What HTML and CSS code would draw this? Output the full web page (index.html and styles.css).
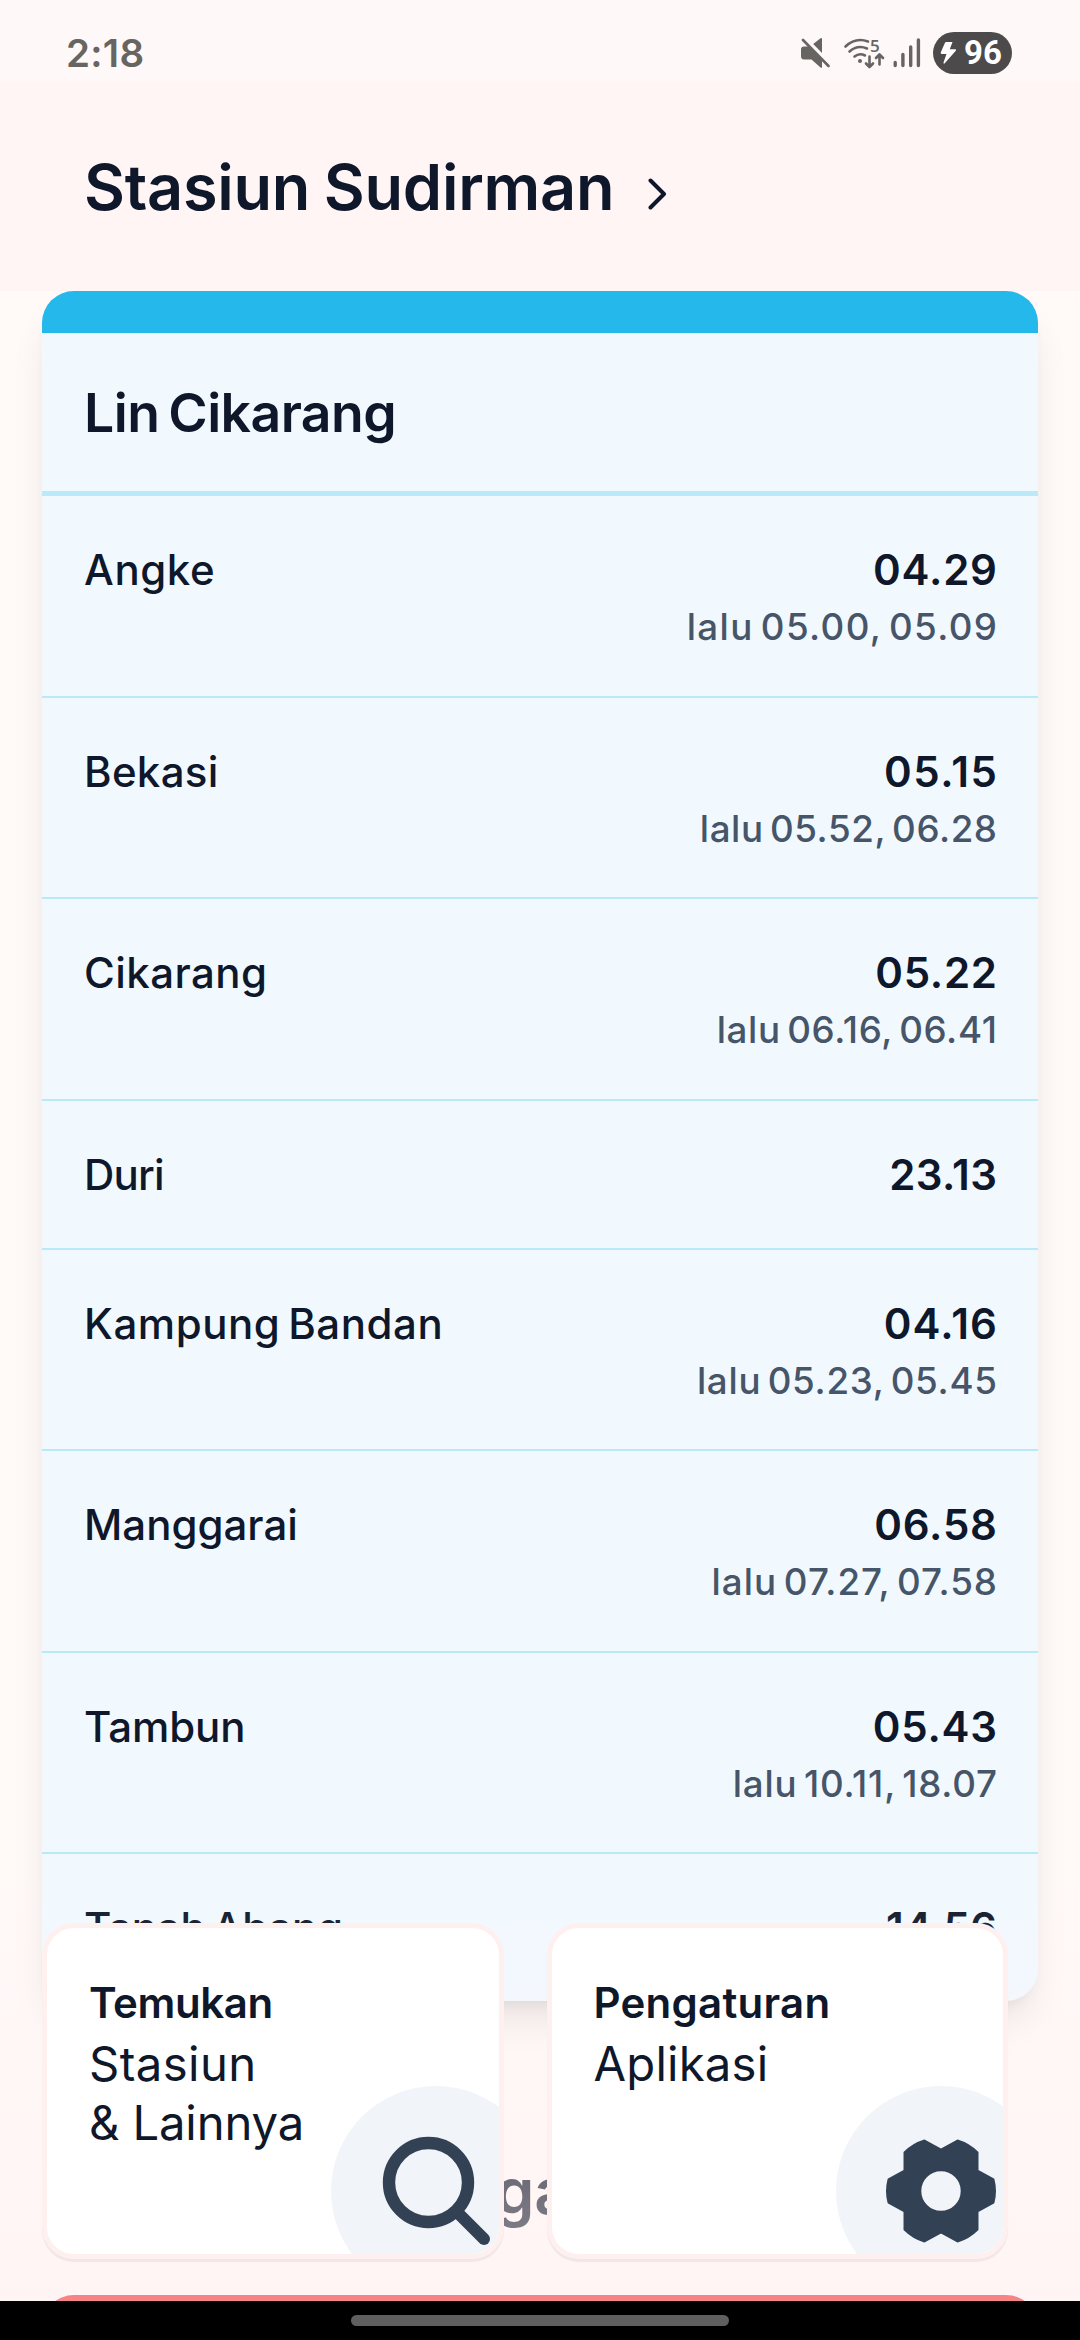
FILE: index.html
```html
<!DOCTYPE html>
<html lang="id">
<head>
<meta charset="utf-8">
<title>Stasiun Sudirman</title>
<link rel="stylesheet" href="styles.css">
</head>
<body>
<div class="screen">
  <header class="statusbar">
    <span class="clock">2:18</span>
    <div class="indicators">
      <svg class="mute" width="30" height="32" viewBox="0 0 30 32" fill="#666562">
        <path d="M1 12.5Q1 9.500 4 9.500H8.500L22 22.500V30.500Q21.500 31 20.500 30.500L11.500 22.500H4Q1 22.500 1 19Z"/>
        <path d="M13.200 7L20.500 1.300Q22 .5 22 2V16Z"/>
        <path d="M5 1.500L29.500 27.500" stroke="#fff8f8" stroke-width="2.400"/>
        <path d="M3 3L28.500 29" stroke="#666562" stroke-width="2.600" stroke-linecap="round"/>
      </svg>
      <svg class="wifi" width="40" height="32" viewBox="0 0 40 32" fill="none" stroke="#666562" stroke-width="2.600" stroke-linecap="round" stroke-linejoin="round">
        <path d="M1.500 9.500Q11.500 0 24 4.500M5.500 14.500Q13.500 7.500 23 11.500M10.500 19.500Q15.500 15.500 21 18.500"/>
        <circle cx="16" cy="24" r="2" fill="#666562" stroke="none"/>
        <path d="M25.500 19.500V29.500M22 26.500L25.500 30L29 26.500M35.500 27.500V18M32 21L35.500 17.500L39 21"/>
        <text x="26" y="14.500" class="wifi-gen">5</text>
      </svg>
      <svg class="signal" width="28" height="32" viewBox="0 0 28 32" stroke="#666562" stroke-width="3.400" stroke-linecap="round">
        <path d="M2.200 25.500V28.500M9.900 17.500V28.500M17.700 10V28.500M25.400 3V28.500"/>
      </svg>
      <div class="battery">
        <svg width="17" height="24" viewBox="0 0 17 24" fill="#fff"><path d="M6 1H12.500L9.800 8.300H15.500Q16.500 8.700 15.800 9.800L4.500 22.500Q3.300 23 3.500 21.500L6.500 13H1.500Q.3 12.500 .8 11.300L5 1.800Q5.300 1 6 1Z"/></svg>
        <span>96</span>
      </div>
    </div>
  </header>

  <main class="content">
    <section class="station">
      <div class="station-head">
        <h1>Stasiun Sudirman</h1>
        <svg class="chevron" width="20" height="34" viewBox="0 0 20 34" fill="none" stroke="#0f172a" stroke-width="4" stroke-linecap="round" stroke-linejoin="round"><path d="M2.500 3.500L16 17L2.500 30.500"/></svg>
      </div>
      <article class="line-card">
        <div class="line-band"></div>
        <h2>Lin Cikarang</h2>
        <ul>
          <li class="angke"><span class="name">Angke</span><div class="times"><b>04.29</b><span>lalu 05.00, 05.09</span></div></li>
          <li class="bekasi"><span class="name">Bekasi</span><div class="times"><b>05.15</b><span>lalu 05.52, 06.28</span></div></li>
          <li class="cikarang"><span class="name">Cikarang</span><div class="times"><b>05.22</b><span>lalu 06.16, 06.41</span></div></li>
          <li class="duri"><span class="name">Duri</span><div class="times"><b>23.13</b></div></li>
          <li class="kampung"><span class="name">Kampung Bandan</span><div class="times"><b>04.16</b><span>lalu 05.23, 05.45</span></div></li>
          <li class="manggarai"><span class="name">Manggarai</span><div class="times"><b>06.58</b><span>lalu 07.27, 07.58</span></div></li>
          <li class="tambun"><span class="name">Tambun</span><div class="times"><b>05.43</b><span>lalu 10.11, 18.07</span></div></li>
          <li class="abang"><span class="name">Tanah Abang</span><div class="times"><b>14.56</b></div></li>
        </ul>
      </article>
    </section>
    <section class="station next">
      <div class="station-head"><h1>Stasiun Manggarai</h1></div>
      <article class="line-card"><div class="line-band red"></div></article>
    </section>
  </main>

  <nav class="dock">
    <a class="tile find">
      <strong>Temukan</strong>
      <span class="l1">Stasiun</span><span class="l2">&amp; Lainnya</span>
      <svg class="art" width="210" height="210" viewBox="-105 -105 210 210">
        <circle r="105" fill="#f1f5f9"/>
        <circle cx="-7.500" cy="-8.500" r="39.500" fill="none" stroke="#334155" stroke-width="12.400"/>
        <path d="M22 22L48 48" stroke="#334155" stroke-width="12" stroke-linecap="round"/>
      </svg>
    </a>
    <a class="tile settings">
      <strong>Pengaturan</strong>
      <span class="l1">Aplikasi</span>
      <svg class="art" width="210" height="210" viewBox="-105 -105 210 210">
        <circle r="105" fill="#f1f5f9"/>
        <path fill="#334155" fill-rule="evenodd" stroke="#334155" stroke-width="2" stroke-linejoin="round" d="M-16.500 -50.500L0 -41.300L16.500 -50.500Q28 -47 36.500 -38.500V-20.300L52.500 -11.500Q55.500 0 52.500 11.500L36.500 20.300V38.500Q28 47 16.500 50.500L0 41.300L-16.500 50.500Q-28 47 -36.500 38.500V20.300L-52.500 11.500Q-55.500 0 -52.500 -11.500L-36.500 -20.300V-38.500Q-28 -47 -16.500 -50.500ZM20.700 0A20.700 20.700 0 1 0 -20.700 0A20.700 20.700 0 1 0 20.700 0Z"/>
      </svg>
    </a>
  </nav>

  <footer class="gesture"><i></i></footer>
</div>
</body>
</html>
```
FILE: styles.css
```css
* { box-sizing: border-box; margin: 0; padding: 0; }

body {
  background: #fff9f8;
  color: #0f172a;
  font-family: Inter, "Open Sans", sans-serif;
}

.screen {
  position: relative;
  display: flex;
  flex-direction: column;
  width: 1080px;
  height: 2340px;
  overflow: hidden;
}

/* Status bar */
.statusbar {
  flex: none;
  display: flex;
  align-items: center;
  justify-content: space-between;
  height: 82px;
  padding: 24px 68px 0 66px;
  background: #fff8f8;
}
.clock {
  font-size: 38.5px;
  font-weight: 600;
  line-height: 58px;
  letter-spacing: .3px;
  color: #666562;
}
.indicators { display: flex; align-items: center; }
.mute { margin-right: 14px; }
.wifi { margin-right: 9px; overflow: visible; }
.wifi-gen {
  font: 600 17px "Open Sans", sans-serif;
  fill: #666562;
  stroke: none;
}
.signal { margin-right: 12px; }
.battery {
  display: flex;
  align-items: center;
  gap: 7px;
  width: 79px;
  height: 42px;
  padding-left: 7px;
  margin-bottom: 1px;
  border-radius: 21px;
  background: #4c4a4b;
  color: #fff;
  font: 700 33px/42px Roboto, sans-serif;
}

/* Stations */
.content { flex: 1; min-height: 0; overflow: hidden; }
.station-head {
  display: flex;
  align-items: center;
  height: 209px;
  padding: 2px 84px 0;
  background: #fff5f5;
}
h1 {
  font-size: 63px;
  font-weight: 600;
  line-height: 79px;
  letter-spacing: -.25px;
  word-spacing: -2px;
}
.chevron { margin: 13px 0 0 34px; }
.next .station-head { height: 294px; padding-top: 87px; background: none; }

.line-card {
  margin: 0 42px;
  border-radius: 32px;
  background: #f1f9ff;
  box-shadow: 0 26px 39px -8px rgba(0, 0, 0, .1), 0 10px 16px -10px rgba(0, 0, 0, .1);
}
.line-band {
  height: 42px;
  border-radius: 32px 32px 0 0;
  background: #25b8eb;
}
.line-band.red { background: #eb0008; }
h2 {
  height: 163px;
  padding: 40px 42px 0;
  border-bottom: 5px solid #bae9f8;
  font-size: 53.5px;
  font-weight: 600;
  line-height: 79px;
  letter-spacing: -.55px;
  word-spacing: -4px;
}
ul { list-style: none; }
li {
  display: flex;
  justify-content: space-between;
  padding: 42px 41px 42px 42px;
  border-bottom: 2px solid #bae9f8;
}
li:last-child { border-bottom: 0; }
.name {
  font-size: 42px;
  font-weight: 500;
  line-height: 63px;
  letter-spacing: var(--name);
  word-spacing: -4px;
}
.times { display: flex; flex-direction: column; align-items: flex-end; }
.times b {
  font-size: 42px;
  font-weight: 600;
  line-height: 63px;
  letter-spacing: var(--time);
  margin-right: calc(0px - var(--time));
}
.times span {
  font-size: 36.75px;
  font-weight: 500;
  line-height: 52.5px;
  letter-spacing: var(--then);
  word-spacing: -4px;
  margin-right: calc(0px - var(--then));
  color: #475569;
}
.angke { --name: .6px; --time: .8px; --then: 1.36px; }
.bekasi { --name: .3px; --time: 1.5px; --then: .57px; }
.cikarang { --name: .44px; --time: .7px; --then: .65px; }
.duri { --name: -.8px; --time: .4px; }
.kampung { --name: .55px; --time: 1.2px; --then: .7px; }
.manggarai { --name: 0px; --time: .8px; --then: 1px; }
.tambun { --name: -.1px; --time: .75px; --then: .76px; }
.abang { --name: -.2px; --time: .1px; }

/* Floating dock over the list */
.dock {
  position: absolute;
  left: 0;
  right: 0;
  bottom: 39px;
  display: flex;
  gap: 43px;
  height: 424px;
  padding: 46px 42px 42px;
  background: linear-gradient(rgba(255, 241, 241, 0), rgba(255, 241, 241, .55));
}
.tile {
  position: relative;
  display: flex;
  flex-direction: column;
  flex: none;
  width: 461.5px;
  height: 336px;
  padding: 43px 42px;
  overflow: hidden;
  border: 5px solid #fff0f0;
  border-radius: 32px;
  background: #fff;
  box-shadow: 0 3px 1px rgba(0, 0, 0, .06);
}
.tile strong {
  font-size: 42px;
  font-weight: 600;
  line-height: 63px;
}
.tile span { font-size: 47.25px; line-height: 59px; }
.find strong { letter-spacing: -.4px; }
.find .l1 { letter-spacing: .4px; }
.find .l2 { letter-spacing: -.15px; }
.settings strong { letter-spacing: .25px; }
.settings .l1 { letter-spacing: .2px; }
.art { position: absolute; left: 284px; top: 158px; }

/* Gesture bar */
.gesture {
  flex: none;
  display: flex;
  justify-content: center;
  height: 39px;
  padding-top: 14px;
  background: #000;
}
.gesture i {
  width: 378px;
  height: 11px;
  border-radius: 6px;
  background: #5f5f5f;
}
```
